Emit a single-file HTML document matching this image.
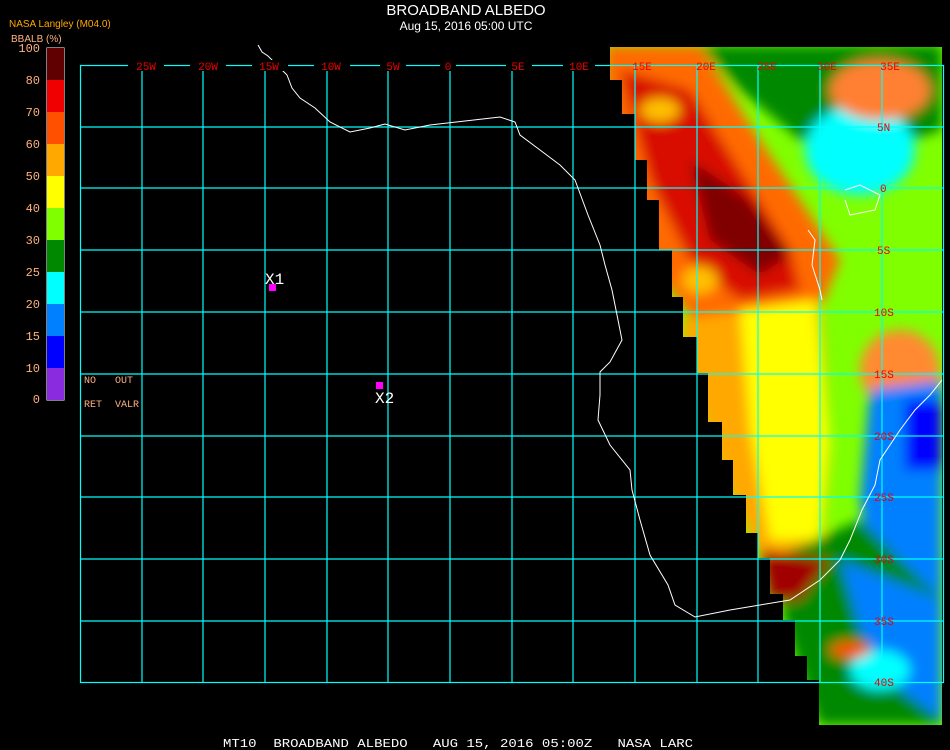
<!DOCTYPE html>
<html><head><style>
html,body{margin:0;padding:0;background:#000;width:950px;height:750px;overflow:hidden}
svg{display:block}
text{font-family:"Liberation Sans",sans-serif}
.m, .m text{font-family:"Liberation Mono",monospace}
</style></head><body>
<svg width="950" height="750" viewBox="0 0 950 750" xmlns="http://www.w3.org/2000/svg">
<defs>
<clipPath id="dc"><polygon points="610,47 942,47 942,725 819,725 819,680 807,680 807,656 795,656 795,620 783,620 783,594 770,594 770,558 758,558 758,533 746,533 746,495 733,495 733,460 722,460 722,422 708,422 708,373 697,373 697,337 683,337 683,297 672,297 672,250 659,250 659,200 647,200 647,160 635,160 635,114 622,114 622,80 610,80"/></clipPath>
<filter id="bl"><feGaussianBlur stdDeviation="6"/></filter>
</defs>
<rect width="950" height="750" fill="#000"/>
<g clip-path="url(#dc)">
<rect x="600" y="40" width="350" height="700" fill="#80ff00"/>
<g filter="url(#bl)">
<polygon points="700,45 942,45 942,130 880,150 800,140 740,90" fill="#008800"/>
<ellipse cx="860" cy="150" rx="55" ry="45" fill="#00ffff"/>
<ellipse cx="880" cy="90" rx="50" ry="30" fill="#ff8030"/>
<polygon points="605,45 700,45 760,140 800,200 840,260 820,310 760,320 700,330 640,250 605,100" fill="#ff6a00"/>
<polygon points="620,70 690,90 740,170 790,250 800,290 740,300 690,260 650,180" fill="#d81000"/>
<polygon points="690,160 750,200 790,255 760,275 710,240" fill="#800000"/>
<ellipse cx="660" cy="110" rx="20" ry="12" fill="#ffc000"/>
<ellipse cx="700" cy="280" rx="18" ry="14" fill="#ffc000"/>
<polygon points="680,320 820,300 830,450 820,560 760,560 720,470 690,380" fill="#ffa800"/>
<polygon points="740,310 815,300 830,440 820,540 770,540 750,430" fill="#ffff00"/>
<ellipse cx="900" cy="370" rx="40" ry="40" fill="#ff8a30"/>
<polygon points="870,390 942,380 942,640 880,620 860,500" fill="#0080ff"/>
<rect x="905" y="400" width="37" height="70" fill="#0000ff"/>
<polygon points="770,560 860,520 942,600 942,725 819,725 790,640" fill="#008800"/>
<polygon points="840,560 942,600 942,720 900,690 860,630" fill="#0080ff"/>
<polygon points="760,550 830,560 800,600 770,600" fill="#a00000"/>
<ellipse cx="880" cy="670" rx="30" ry="20" fill="#00ffff"/>
<ellipse cx="850" cy="650" rx="20" ry="8" fill="#ff5000"/>
</g>
</g>
<g stroke="#00ffff" stroke-width="1.2" fill="none">
<rect x="80.5" y="65.5" width="863" height="617"/>
<path d="M142 65V682M203 65V682M265 65V682M327 65V682M388 65V682M450 65V682M512 65V682M573 65V682M635 65V682M697 65V682M758 65V682M820 65V682M882 65V682M80 127H943M80 188H943M80 250H943M80 312H943M80 374H943M80 436H943M80 497H943M80 559H943M80 621H943"/>
</g>
<polyline fill="none" stroke="#fff" stroke-width="1" points="258,45 262,52 268,56 280,68 287,75 292,88 300,98 315,108 330,122 350,132 370,128 385,124 405,130 430,125 465,121 500,117 515,122 520,135 540,150 560,165 575,180 588,215 600,245 605,265 612,290 618,320 622,340 610,362 600,372 600,395 598,420 610,445 630,470 632,490 640,520 650,555 668,585 675,605 695,617 730,610 760,605 790,600 820,580 840,560 850,540 862,510 875,485 880,460 900,430 915,410 930,395 942,380"/>
<polyline fill="none" stroke="#fff" stroke-width="1" points="808,230 815,240 812,265 820,290 822,300"/>
<polyline fill="none" stroke="#fff" stroke-width="1" points="845,190 860,185 880,195 875,210 850,215 845,200"/>
<g fill="#f00000" font-size="11" class="m" text-anchor="middle">
<rect x="128" y="60" width="36" height="11" fill="#000"/>
<rect x="190" y="60" width="36" height="11" fill="#000"/>
<rect x="252" y="60" width="36" height="11" fill="#000"/>
<rect x="314" y="60" width="36" height="11" fill="#000"/>
<rect x="380" y="60" width="26" height="11" fill="#000"/>
<rect x="440" y="60" width="16" height="11" fill="#000"/>
<rect x="506" y="60" width="26" height="11" fill="#000"/>
<rect x="563" y="60" width="32" height="11" fill="#000"/>
<text x="146" y="70">25W</text><text x="208" y="70">20W</text><text x="269" y="70">15W</text><text x="331" y="70">10W</text><text x="393" y="70">5W</text><text x="448" y="70">0</text><text x="518" y="70">5E</text><text x="579" y="70">10E</text><text x="642" y="70">15E</text><text x="706" y="70">20E</text><text x="767" y="70">25E</text><text x="827" y="70">30E</text><text x="890" y="70">35E</text>
<g text-anchor="start"><text x="877" y="131">5N</text><text x="880" y="192">0</text><text x="877" y="254">5S</text><text x="874" y="316">10S</text><text x="874" y="378">15S</text><text x="874" y="440">20S</text><text x="874" y="501">25S</text><text x="874" y="563">30S</text><text x="874" y="625">35S</text><text x="874" y="686">40S</text></g>
</g>
<text x="466" y="15" fill="#fff" font-size="15" text-anchor="middle">BROADBAND ALBEDO</text>
<text x="466" y="30" fill="#fff" font-size="12" text-anchor="middle">Aug 15, 2016 05:00 UTC</text>
<text x="9" y="27" fill="#ffa800" font-size="10">NASA Langley (M04.0)</text>
<text x="11" y="42" fill="#ffb080" font-size="10">BBALB (%)</text>
<rect x="46.5" y="47.5" width="18" height="353" fill="#fff"/>
<rect x="47" y="48" width="17" height="32" fill="#600000"/><rect x="47" y="80" width="17" height="32" fill="#f00000"/><rect x="47" y="112" width="17" height="32" fill="#ff5000"/><rect x="47" y="144" width="17" height="32" fill="#ffa800"/><rect x="47" y="176" width="17" height="32" fill="#ffff00"/><rect x="47" y="208" width="17" height="32" fill="#80ff00"/><rect x="47" y="240" width="17" height="32" fill="#008800"/><rect x="47" y="272" width="17" height="32" fill="#00ffff"/><rect x="47" y="304" width="17" height="32" fill="#0080ff"/><rect x="47" y="336" width="17" height="32" fill="#0000ff"/><rect x="47" y="368" width="17" height="32" fill="#8a2be0"/>
<g fill="#ffb080" font-size="12" class="m" text-anchor="end">
<text x="40" y="52">100</text><text x="40" y="84">80</text><text x="40" y="116">70</text><text x="40" y="148">60</text><text x="40" y="180">50</text><text x="40" y="212">40</text><text x="40" y="244">30</text><text x="40" y="276">25</text><text x="40" y="308">20</text><text x="40" y="340">15</text><text x="40" y="372">10</text><text x="40" y="403">0</text>
</g>
<g fill="#ffb080" font-size="10" class="m">
<text x="84" y="383">NO</text><text x="115" y="383">OUT</text><text x="84" y="407">RET</text><text x="115" y="407">VALR</text>
</g>
<rect x="269" y="284" width="7" height="7" fill="#ff00ff"/>
<text x="265" y="284" fill="#fff" font-size="16" class="m">X1</text>
<rect x="376" y="382" width="7" height="7" fill="#ff00ff"/>
<text x="375" y="403" fill="#fff" font-size="16" class="m">X2</text>
<text x="223" y="747" fill="#fff" font-size="12" class="m" textLength="470" lengthAdjust="spacingAndGlyphs" xml:space="preserve">MT10  BROADBAND ALBEDO   AUG 15, 2016 05:00Z   NASA LARC</text>
</svg>
</body></html>
